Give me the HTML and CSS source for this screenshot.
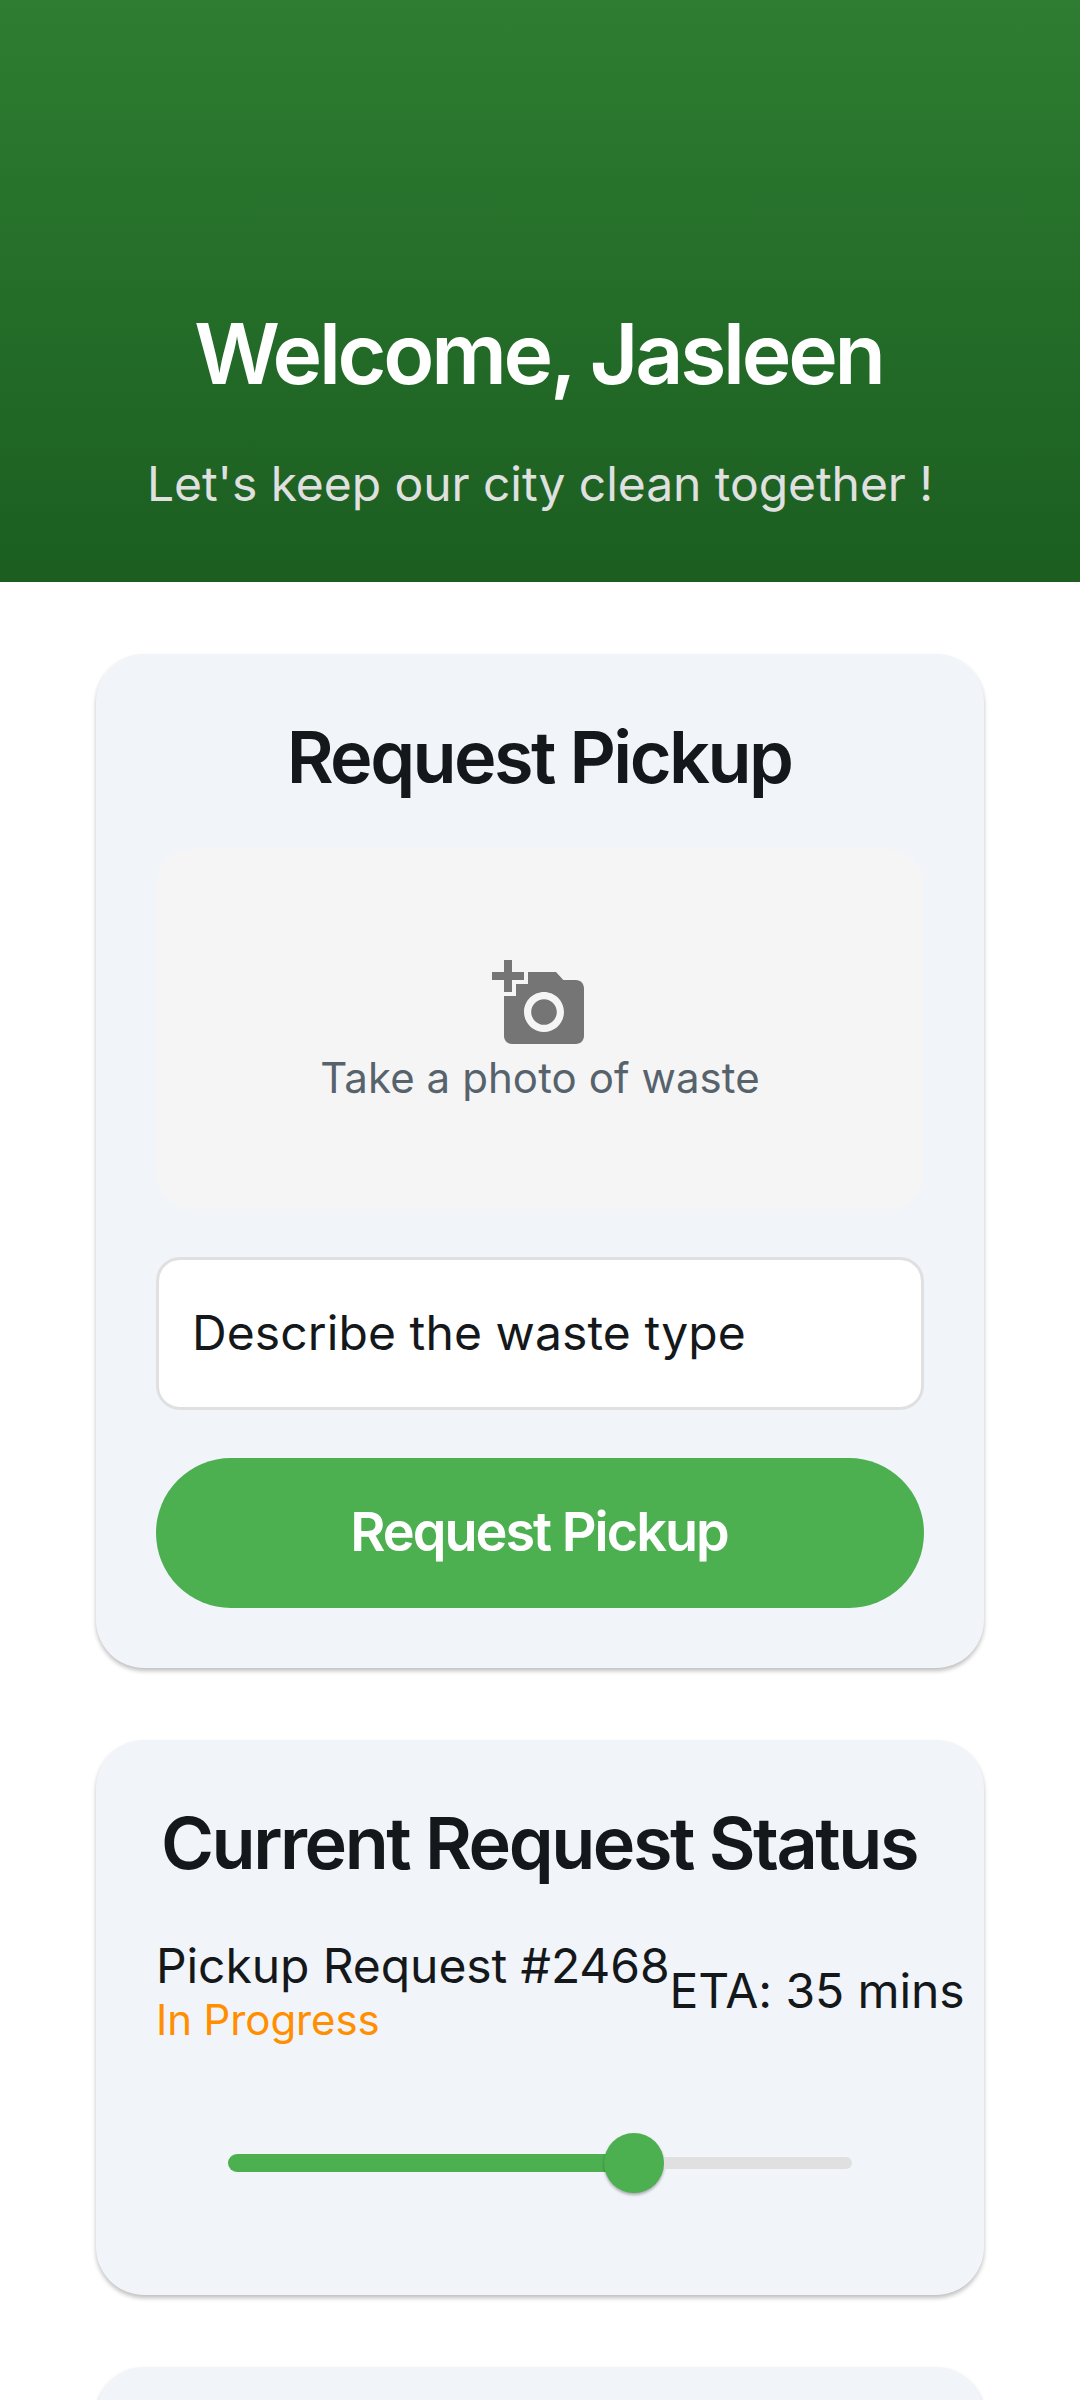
FILE: index.html
```html
<!DOCTYPE html>
<html lang="en">
<head>
<meta charset="utf-8">
<title>Waste Pickup</title>
<link rel="stylesheet" href="styles.css">
</head>
<body>
<header class="hero">
  <h1 class="hero-title"><span>Welcome, Jasleen</span></h1>
  <p class="hero-sub"><span>Let's keep our city clean together !</span></p>
</header>
<main class="cards">
  <section class="card card-request">
    <h2 class="card-title"><span>Request Pickup</span></h2>
    <div class="photo">
      <svg class="camera" viewBox="0 0 24 24" width="96" height="96"><path d="M3 4V1h2v3h3v2H5v3H3V6H0V4h3zm3 6V7h3V4h7l1.830 2H21c1.100 0 2 .9 2 2v12c0 1.100-.9 2-2 2H5c-1.100 0-2-.9-2-2V10h3zm7 9c2.760 0 5-2.240 5-5s-2.240-5-5-5-5 2.240-5 5 2.240 5 5 5zm-3.200-5c0 1.770 1.430 3.200 3.200 3.200s3.200-1.430 3.200-3.200-1.430-3.200-3.200-3.200-3.200 1.430-3.200 3.200z"/></svg>
      <span class="photo-label">Take a photo of waste</span>
    </div>
    <div class="field"><span>Describe the waste type</span></div>
    <button class="submit"><span>Request Pickup</span></button>
  </section>
  <section class="card card-status">
    <h2 class="card-title status-title"><span>Current Request Status</span></h2>
    <div class="status-row">
      <div class="status-info">
        <span class="request-id">Pickup Request #2468</span>
        <span class="state">In Progress</span>
      </div>
      <span class="eta">ETA: 35 mins</span>
    </div>
    <div class="slider"><div class="done"></div><div class="thumb"></div><div class="rest"></div></div>
  </section>
  <section class="card card-next"></section>
</main>
</body>
</html>
```
FILE: styles.css
```css
* { box-sizing: border-box; }
body { margin: 0; height: 2400px; overflow: hidden; background: #fff; color: #14181b; font-family: Inter, sans-serif; }
h1, h2, p { margin: 0; }
span { white-space: nowrap; }
.hero { height: 582px; padding-top: 300px; background: linear-gradient(#2e7d32, #1b5e20); text-align: center; }
.hero-title { padding-right: 3px; font-size: 84px; line-height: 108px; font-weight: 600; letter-spacing: -3.250px; color: #fff; }
.hero-sub { margin-top: 46px; font-size: 48px; line-height: 60px; color: #e0e0e0; letter-spacing: -.06px; }
.cards { padding: 72px 96px 0; display: flex; flex-direction: column; gap: 72px; }
.card { border-radius: 48px; background: #f1f4f8; padding: 60px; box-shadow: 0 3px 4px rgba(0,0,0,.25); }
.card-request { height: 1014px; }
.card-status { height: 555px; }
.card-next { height: 33px; border-radius: 48px 48px 0 0; }
.card-title { height: 87px; padding-right: 2px; line-height: 86px; font-size: 72px; font-weight: 600; letter-spacing: -2.560px; text-align: center; }
.status-title { letter-spacing: -2.450px; }
.photo { height: 360px; margin-top: 48px; border-radius: 36px; background: #f5f5f5; display: flex; flex-direction: column; align-items: center; justify-content: center; }
.camera { fill: #757575; }
.photo-label { font-size: 42px; line-height: 51px; color: #57636c; letter-spacing: .08px; }
.field { height: 153px; margin-top: 48px; padding: 0 0 2px 33px; display: flex; align-items: center; border: 3px solid #e0e0e0; border-radius: 24px; background: #fff; font-size: 48px; letter-spacing: .1px; }
.submit { display: block; width: 100%; height: 150px; margin-top: 48px; padding: 0 2px 3px 0; border: 0; border-radius: 75px; background: #4caf50; color: #fff; font: 600 54px Inter, sans-serif; letter-spacing: -2px; }
.status-row { height: 111px; margin-top: 48px; display: flex; align-items: center; }
.status-info { display: flex; flex-direction: column; }
.request-id, .eta { font-size: 48px; line-height: 58px; letter-spacing: -.08px; }
.eta { padding-top: 1px; }
.state { font-size: 42px; line-height: 49px; color: #ff8f00; letter-spacing: -.1px; }
.slider { height: 60px; margin: 87px 72px 0; display: flex; align-items: center; }
.done { width: 406px; height: 18px; border-radius: 9px; background: #4caf50; }
.thumb { width: 60px; height: 60px; margin-left: -30px; border-radius: 50%; background: #4caf50; box-shadow: 0 2px 3px rgba(0,0,0,.3); }
.rest { flex: 1; height: 12px; border-radius: 0 6px 6px 0; background: #e0e0e0; }
```
